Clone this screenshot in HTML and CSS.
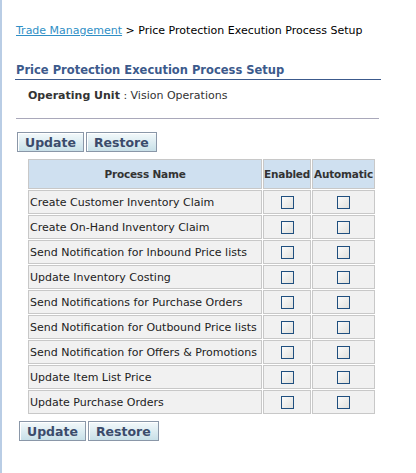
FILE: index.html
```html
<!DOCTYPE html>
<html>
<head>
<meta charset="utf-8">
<link rel="stylesheet" href="styles.css">
</head>
<body>
<div class="page">
  <div class="crumbs"><a href="#" class="link">Trade Management</a> &gt; Price Protection Execution Process Setup</div>
  <h1 class="title">Price Protection Execution Process Setup</h1>
  <div class="ou"><span class="ou-label">Operating Unit</span> : Vision Operations</div>
  <div class="sep"></div>
  <div class="btns top">
    <button class="btn">Update</button><button class="btn">Restore</button>
  </div>
  <table class="grid">
    <thead>
      <tr><th class="c1">Process Name</th><th class="c2">Enabled</th><th class="c3">Automatic</th></tr>
    </thead>
    <tbody>
      <tr><td class="c1">Create Customer Inventory Claim</td><td class="c2"><span class="cb"></span></td><td class="c3"><span class="cb"></span></td></tr>
      <tr><td class="c1">Create On-Hand Inventory Claim</td><td class="c2"><span class="cb"></span></td><td class="c3"><span class="cb"></span></td></tr>
      <tr><td class="c1">Send Notification for Inbound Price lists</td><td class="c2"><span class="cb"></span></td><td class="c3"><span class="cb"></span></td></tr>
      <tr><td class="c1">Update Inventory Costing</td><td class="c2"><span class="cb"></span></td><td class="c3"><span class="cb"></span></td></tr>
      <tr><td class="c1">Send Notifications for Purchase Orders</td><td class="c2"><span class="cb"></span></td><td class="c3"><span class="cb"></span></td></tr>
      <tr><td class="c1">Send Notification for Outbound Price lists</td><td class="c2"><span class="cb"></span></td><td class="c3"><span class="cb"></span></td></tr>
      <tr><td class="c1">Send Notification for Offers &amp; Promotions</td><td class="c2"><span class="cb"></span></td><td class="c3"><span class="cb"></span></td></tr>
      <tr><td class="c1">Update Item List Price</td><td class="c2"><span class="cb"></span></td><td class="c3"><span class="cb"></span></td></tr>
      <tr><td class="c1">Update Purchase Orders</td><td class="c2"><span class="cb"></span></td><td class="c3"><span class="cb"></span></td></tr>
    </tbody>
  </table>
  <div class="btns bottom">
    <button class="btn">Update</button><button class="btn">Restore</button>
  </div>
</div>
</body>
</html>
```
FILE: styles.css
```css
html, body {
  margin: 0;
  padding: 0;
  background: #ffffff;
}
body {
  font-family: "DejaVu Sans", Tahoma, sans-serif;
  font-size: 11px;
  color: #000;
}
.page {
  border-left: 2px solid #b9cde5;
  min-height: 473px;
  box-sizing: border-box;
  padding: 23px 0 0 13px;
  width: 380px;
}
.crumbs {
  height: 16px;
  line-height: 16px;
  padding-left: 1px;
  white-space: nowrap;
}
.link {
  color: #2f8fc6;
  text-decoration: underline;
}
.title {
  margin: 23px 0 0 0;
  font-size: 11.5px;
  font-weight: bold;
  color: #3c5a8c;
  line-height: 16px;
  padding: 0 0 1px 1px;
  border-bottom: 1px solid #3c5a8c;
  width: 365px;
}
.ou {
  margin-top: 8px;
  padding-left: 13px;
  line-height: 16px;
  color: #333;
}
.ou-label {
  font-weight: bold;
}
.sep {
  margin: 14px 0 0 1px;
  height: 0;
  border-top: 1px solid #a9a8ba;
  width: 363px;
}
.btns {
  display: flex;
  gap: 2px;
}
.btns.top {
  margin: 13px 0 0 2px;
}
.btns.bottom {
  margin: 5px 0 0 4px;
}
.btn {
  font-family: "DejaVu Sans", Tahoma, sans-serif;
  font-size: 12.5px;
  font-weight: bold;
  color: #3b4b6b;
  height: 20px;
  padding: 0 7px;
  border: 1px solid #8a97a8;
  background: linear-gradient(#f3f9fb, #c8e0e8);
  box-shadow: inset 1px 1px 0 #ffffff;
  line-height: 17px;
}
.grid {
  margin: 7px 0 0 13px;
  border-collapse: separate;
  border-spacing: 1px;
  table-layout: fixed;
  width: 349px;
  position: relative;
  left: -1px;
  top: -1px;
}
.grid th, .grid td {
  border: 1px solid #c8c8c8;
  padding: 0;
}
.grid th {
  background: #cfe0f0;
  color: #333;
  font-weight: bold;
  font-size: 10.5px;
  height: 28px;
  white-space: nowrap;
  letter-spacing: -0.2px;
}
.grid td {
  background: #f1f1f1;
  height: 22px;
  color: #222;
}
.grid td.c1 {
  padding-left: 1px;
  white-space: nowrap;
}
.c1 { width: 232px; }
.c2 { width: 46px; text-align: center; }
.c3 { width: 61px; text-align: center; }
.cb {
  display: inline-block;
  width: 11px;
  height: 11px;
  border: 1px solid #1f4f7f;
  background: linear-gradient(135deg, #fbfbfb, #e0e0dc);
  vertical-align: middle;
}
```
